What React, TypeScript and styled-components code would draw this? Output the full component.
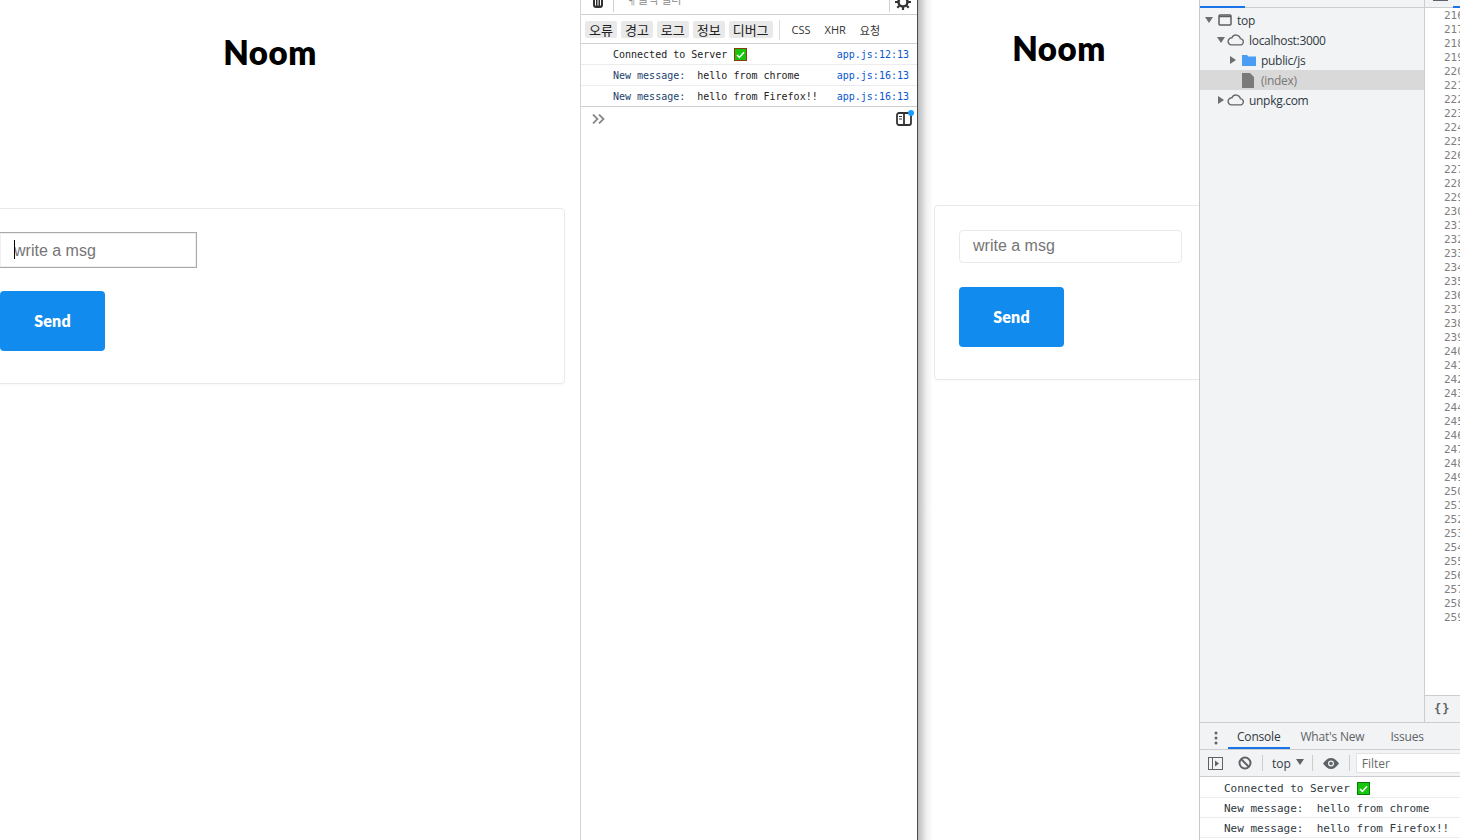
import styled, { createGlobalStyle } from "styled-components";

const GlobalStyle = createGlobalStyle`
  html, body {
    margin: 0;
    padding: 0;
    background: #fff;
    overflow: hidden;
  }
  * { box-sizing: border-box; }
`;

const uiFont = `"Open Sans", "Noto Sans CJK KR", sans-serif`;
const monoFont = `"DejaVu Sans Mono", monospace`;

const Screen = styled.div`
  display: flex;
  width: 1460px;
  height: 840px;
  overflow: hidden;
`;

/* page previews */
const Page = styled.div<{ $width: number }>`
  width: ${({ $width }) => $width}px;
  flex: none;
  height: 100%;
  overflow: hidden;
  background: #fff;
`;

const LeftPage = styled(Page)`
  border-right: 1px solid #d6d6d6;
`;

const RightPage = styled(Page)`
  position: relative;
  &::before {
    content: "";
    position: absolute;
    left: 0;
    top: 0;
    bottom: 0;
    width: 15px;
    background: linear-gradient(90deg, #bdbdbd, #f2f2f2 60%, #fff);
  }
`;

const Title = styled.h1<{ $top: number; $bottom: number; $left: number; $width: number }>`
  margin: ${({ $top }) => $top}px 0 ${({ $bottom }) => $bottom}px ${({ $left }) => $left}px;
  width: ${({ $width }) => $width}px;
  text-align: center;
  font: 800 33px/40px Lato, sans-serif;
  letter-spacing: 0.5px;
  color: #000;
`;

const Card = styled.section<{ $left: number; $width: number }>`
  margin-left: ${({ $left }) => $left}px;
  width: ${({ $width }) => $width}px;
  padding: 24px 24px 32px;
  border: 1px solid #e9e9e9;
  border-radius: 4px;
  background: #fff;
  box-shadow: 0 1px 2px rgba(0, 0, 0, 0.03);
`;

const InputBox = styled.div`
  width: 223px;
  height: 33px;
  margin-bottom: 24px;
  padding: 0 0 2px 13px;
  display: flex;
  align-items: center;
  background: #fff;
  font: 16px "Liberation Sans", Arial, sans-serif;
  color: #757575;
  border: 1px solid #e9e9e9;
  border-radius: 4px;
`;

const FocusedInput = styled(InputBox)`
  position: relative;
  width: 198px;
  height: 36px;
  margin: -1px 0 23px -1px;
  padding: 2px 0 0 14px;
  border-color: #a9a9ad;
  border-radius: 0;
  box-shadow: inset 0 0 0 1px #efefef;
`;

const Caret = styled.span`
  position: absolute;
  left: 14px;
  top: 7px;
  width: 1px;
  height: 19px;
  background: #000;
`;

const SendButton = styled.button`
  display: block;
  width: 105px;
  height: 60px;
  border: none;
  border-radius: 4px;
  background: #118bee;
  color: #fff;
  font: 800 16px Lato, sans-serif;
  letter-spacing: 0.2px;
  padding: 0 0 2px;
`;

/* popup devtools */
const Devtools = styled.div`
  width: 337px;
  flex: none;
  height: 100%;
  background: #fff;
  border-right: 1px solid #4a4a4a;
  overflow: hidden;
  font-family: ${uiFont};
`;

const TopBar = styled.div`
  height: 15px;
  border-bottom: 1px solid #d0d0d0;
  position: relative;
  overflow: hidden;
`;

const TrashIcon = styled.svg`
  position: absolute;
  left: 11px;
  top: -3px;
`;

const GearIcon = styled.svg`
  position: absolute;
  left: 314px;
  top: -6px;
`;

const TopDivider = styled.span<{ $left: number }>`
  position: absolute;
  left: ${({ $left }) => $left}px;
  top: 0;
  width: 1px;
  height: 12px;
  background: #d0d0d0;
`;

const ClippedFilter = styled.span`
  position: absolute;
  left: 47px;
  top: -7px;
  font-size: 11px;
  line-height: 14px;
  color: #8a8a8a;
`;

const LevelBar = styled.div`
  height: 29px;
  padding: 6px 0 0 4px;
  display: flex;
  gap: 4px;
  border-bottom: 1px solid #d0d0d0;
  font-size: 13px;
`;

const Level = styled.span`
  height: 17px;
  padding: 0 4px;
  display: flex;
  align-items: center;
  background: #e9e9e9;
  border-radius: 2px;
  color: #222;
`;

const LevelDivider = styled.span`
  width: 1px;
  height: 20px;
  margin: -1px 8px 0 2px;
  background: #dcdcdc;
`;

const LevelText = styled.span`
  height: 17px;
  display: flex;
  align-items: center;
  margin-right: 10px;
  color: #333;
  font-size: 11px;
`;

const LogRow = styled.div<{ $height?: number; $indent: number; $size?: number }>`
  height: ${({ $height }) => $height ?? 21}px;
  padding-left: ${({ $indent }) => $indent}px;
  display: flex;
  align-items: center;
  border-bottom: 1px solid #ececec;
  font: ${({ $size }) => $size ?? 10}px ${monoFont};
  white-space: pre;
  color: #222;
`;

const LastLogRow = styled(LogRow)`
  border-bottom-color: #d0d0d0;
`;

const Blue = styled.span`
  color: #1d3f6e;
`;

const Source = styled.span`
  margin-left: auto;
  margin-right: 8px;
  color: #0b57d0;
`;

const CheckBox = styled.svg`
  margin-left: 7px;
  flex: none;
`;

const Prompt = styled.div`
  height: 24px;
  padding: 0 5px 0 11px;
  display: flex;
  align-items: center;
  justify-content: space-between;
  position: relative;
`;

const BlueDot = styled.span`
  position: absolute;
  right: 3px;
  top: 3px;
  width: 6px;
  height: 6px;
  border-radius: 50%;
  background: #1a9bff;
`;

/* docked devtools */
const Docked = styled.div`
  flex: 1;
  min-width: 0;
  height: 100%;
  display: flex;
  flex-direction: column;
  border-left: 1px solid #c6c8cc;
  font-family: ${uiFont};
  background: #f1f3f4;
`;

const SourcesArea = styled.div`
  height: 723px;
  display: flex;
  border-bottom: 1px solid #cbcdd1;
  flex: none;
`;

const Navigator = styled.div`
  width: 225px;
  flex: none;
  border-right: 1px solid #cbcdd1;
`;

const NavTabs = styled.div`
  height: 8px;
  border-bottom: 1px solid #cbcdd1;
  position: relative;
  display: flex;
`;

const NavLabel = styled.span<{ $left: number }>`
  position: absolute;
  left: ${({ $left }) => $left}px;
  top: -15px;
  font-size: 12px;
  line-height: 16px;
  color: #5f6368;
`;

const ActiveLine = styled.span<{ $left: number; $width: number }>`
  position: absolute;
  left: ${({ $left }) => $left}px;
  width: ${({ $width }) => $width}px;
  bottom: -1px;
  height: 2px;
  background: #1a73e8;
`;

const TreeList = styled.div`
  padding-top: 2px;
`;

const TreeRow = styled.div<{ $indent: number; $selected?: boolean }>`
  height: 20px;
  padding-left: ${({ $indent }) => $indent}px;
  display: flex;
  align-items: center;
  gap: 5px;
  font-size: 12px;
  letter-spacing: -0.3px;
  color: ${({ $selected }) => ($selected ? "#777" : "#303942")};
  background: ${({ $selected }) => ($selected ? "#d9d9d9" : "transparent")};
`;

const Arrow = styled.span<{ $open?: boolean; $hidden?: boolean }>`
  width: 0;
  height: 0;
  flex: none;
  visibility: ${({ $hidden }) => ($hidden ? "hidden" : "visible")};
  ${({ $open }) =>
    $open
      ? `border-left: 4px solid transparent; border-right: 4px solid transparent; border-top: 6px solid #6e6e6e;`
      : `border-top: 4px solid transparent; border-bottom: 4px solid transparent; border-left: 6px solid #6e6e6e; margin-right: 1px;`}
`;

const CloudIcon = styled.svg`
  margin-left: -3px;
  flex: none;
`;

const Editor = styled.div`
  flex: 1;
  min-width: 0;
  background: #fff;
  display: flex;
  flex-direction: column;
  overflow: hidden;
`;

const EditorTabs = styled.div`
  height: 8px;
  background: #f1f3f4;
  border-bottom: 1px solid #cbcdd1;
  position: relative;
  flex: none;
`;

const ClippedTabIcon = styled.span`
  position: absolute;
  left: 8px;
  top: 0;
  width: 15px;
  height: 1px;
  background: #5f6368;
`;

const Gutter = styled.div`
  flex: 1;
  padding: 1px 0 0 19px;
  font: 11px/14px ${monoFont};
  color: #7f7f7f;
  white-space: nowrap;
`;

const FormatBar = styled.div`
  height: 27px;
  flex: none;
  background: #f1f3f4;
  border-top: 1px solid #cbcdd1;
  display: flex;
  align-items: center;
  padding-left: 9px;
  font: bold 12px ${monoFont};
  color: #5f6368;
  letter-spacing: 1px;
`;

const DrawerTabs = styled.div`
  height: 27px;
  flex: none;
  display: flex;
  align-items: stretch;
  border-bottom: 1px solid #cbcdd1;
  font-size: 12px;
  letter-spacing: -0.2px;
  color: #5f6368;
`;

const Kebab = styled.svg`
  margin: 8px 10px 0 14px;
`;

const DrawerTab = styled.span<{ $active?: boolean; $gap: number }>`
  display: flex;
  align-items: center;
  padding: 1px 10px 0 ${({ $gap }) => $gap}px;
  color: ${({ $active }) => ($active ? "#303942" : "#5f6368")};
  ${({ $active }) => ($active ? "box-shadow: inset 0 -2px 0 #1a73e8;" : "")}
`;

const ConsoleBar = styled.div`
  height: 27px;
  flex: none;
  display: flex;
  align-items: center;
  border-bottom: 1px solid #cbcdd1;
  padding-left: 8px;
  font-size: 12px;
  color: #303942;
  overflow: hidden;

  & svg {
    flex: none;
  }
`;

const BanIcon = styled.svg`
  margin-left: 15px;
`;

const BarDivider = styled.span<{ $margin: string }>`
  width: 1px;
  height: 16px;
  background: #cbcdd1;
  margin: ${({ $margin }) => $margin};
  flex: none;
`;

const ContextArrow = styled.span`
  border-left: 4px solid transparent;
  border-right: 4px solid transparent;
  border-top: 6px solid #5f6368;
  margin: -3px 0 0 5px;
`;

const FilterBox = styled.div`
  width: 110px;
  height: 20px;
  flex: none;
  background: #fff;
  border: 1px solid #e3e3e3;
  border-right: none;
  margin-left: 6px;
  padding: 1px 0 0 5px;
  display: flex;
  align-items: center;
  color: #6a6a6a;
`;

const ConsoleOutput = styled.div`
  flex: 1;
  background: #fff;
`;

const DockedRow = styled(LogRow)`
  padding-top: 2px;
  color: #303942;
`;

const lineNumbers = Array.from({ length: 44 }, (_, i) => 216 + i);

function CheckMark({ edge }: { edge: string }) {
  return (
    <CheckBox width="13" height="13" viewBox="0 0 13 13">
      <rect x="0.5" y="0.5" width="12" height="12" fill="#16c60c" stroke={edge} />
      <path d="M3 7l2.4 2.4L10 4.2" fill="none" stroke="#fff" strokeWidth="1.5" />
    </CheckBox>
  );
}

function Cloud() {
  return (
    <CloudIcon width="17" height="12" viewBox="0 0 19 13" fill="none" stroke="#666" strokeWidth="1.5">
      <path d="M5 12h9.500a3.500 3.500 0 0 0 .5-7 5 5 0 0 0-9.500-1A4 4 0 0 0 5 12z" />
    </CloudIcon>
  );
}

export default function App() {
  return (
    <>
      <GlobalStyle />
      <Screen>
        <LeftPage $width={581}>
          <Title $top={32} $bottom={136} $left={0} $width={540}>
            Noom
          </Title>
          <Card $left={-25} $width={590}>
            <FocusedInput>
              <Caret />
              write a msg
            </FocusedInput>
            <SendButton>Send</SendButton>
          </Card>
        </LeftPage>

        <Devtools>
          <TopBar>
            <TrashIcon width="12" height="12" viewBox="0 0 12 12">
              <path d="M1 0h10v8a3 3 0 0 1-3 3H4a3 3 0 0 1-3-3z" fill="#333" />
              <path d="M3.500 0v8.500M6 0v8.500M8.500 0v8.500" stroke="#fff" />
            </TrashIcon>
            <TopDivider $left={32} />
            <ClippedFilter>¶ 클릭 필터</ClippedFilter>
            <TopDivider $left={308} />
            <GearIcon width="16" height="16" viewBox="0 0 16 16">
              <circle cx="8" cy="8" r="4.500" fill="none" stroke="#333" strokeWidth="2.500" />
              <path d="M8 0v3M8 13v3M0 8h3M13 8h3M2.300 2.300l2 2M11.700 11.700l2 2M2.300 13.700l2-2M11.700 4.300l2-2" stroke="#333" strokeWidth="2.200" />
            </GearIcon>
          </TopBar>
          <LevelBar>
            <Level>오류</Level>
            <Level>경고</Level>
            <Level>로그</Level>
            <Level>정보</Level>
            <Level>디버그</Level>
            <LevelDivider />
            <LevelText>CSS</LevelText>
            <LevelText>XHR</LevelText>
            <LevelText>요청</LevelText>
          </LevelBar>
          <LogRow $indent={32}>
            Connected to Server
            <CheckMark edge="#8a3a10" />
            <Source>app.js:12:13</Source>
          </LogRow>
          <LogRow $indent={32}>
            <Blue>New message:</Blue>  hello from chrome
            <Source>app.js:16:13</Source>
          </LogRow>
          <LastLogRow $indent={32}>
            <Blue>New message:</Blue>  hello from Firefox!!
            <Source>app.js:16:13</Source>
          </LastLogRow>
          <Prompt>
            <svg width="13" height="10" viewBox="0 0 13 10" fill="none" stroke="#8a8a8a" strokeWidth="1.800">
              <path d="M1 0.500l4.500 4.500L1 9.500M7 0.500l4.500 4.500L7 9.500" />
            </svg>
            <svg width="16" height="14" viewBox="0 0 16 14" fill="none" stroke="#333" strokeWidth="1.800">
              <rect x="1" y="1" width="14" height="12" rx="2" />
              <path d="M8 1v12" />
              <path d="M3 4.500h3M3 7h3" strokeWidth="1.100" />
            </svg>
            <BlueDot />
          </Prompt>
        </Devtools>

        <RightPage $width={281}>
          <Title $top={28} $bottom={137} $left={17} $width={248}>
            Noom
          </Title>
          <Card $left={16} $width={400}>
            <InputBox>write a msg</InputBox>
            <SendButton>Send</SendButton>
          </Card>
        </RightPage>

        <Docked>
          <SourcesArea>
            <Navigator>
              <NavTabs>
                <NavLabel $left={8}>Page</NavLabel>
                <NavLabel $left={53}>Filesystem</NavLabel>
                <ActiveLine $left={0} $width={45} />
              </NavTabs>
              <TreeList>
                <TreeRow $indent={5}>
                  <Arrow $open />
                  <svg width="14" height="12" viewBox="0 0 14 12" fill="none" stroke="#5f5f5f" strokeWidth="1.500">
                    <rect x="1" y="1" width="12" height="10" rx="1" />
                    <path d="M1 2.500h12" />
                  </svg>
                  top
                </TreeRow>
                <TreeRow $indent={17}>
                  <Arrow $open />
                  <Cloud />
                  localhost:3000
                </TreeRow>
                <TreeRow $indent={30}>
                  <Arrow />
                  <svg width="14" height="12" viewBox="0 0 14 12">
                    <path d="M0 1h5l1.500 1.500H14V12H0z" fill="#4b9df3" />
                  </svg>
                  public/js
                </TreeRow>
                <TreeRow $indent={30} $selected>
                  <Arrow $hidden />
                  <svg width="14" height="15" viewBox="0 0 14 15">
                    <path d="M0 0h8l4 4v11H0z" fill="#7a7a7a" />
                  </svg>
                  (index)
                </TreeRow>
                <TreeRow $indent={18}>
                  <Arrow />
                  <Cloud />
                  unpkg.com
                </TreeRow>
              </TreeList>
            </Navigator>
            <Editor>
              <EditorTabs>
                <ClippedTabIcon />
                <ActiveLine $left={28} $width={8} />
              </EditorTabs>
              <Gutter>
                {lineNumbers.map((n) => (
                  <div key={n}>{n}</div>
                ))}
              </Gutter>
              <FormatBar>{"{}"}</FormatBar>
            </Editor>
          </SourcesArea>

          <DrawerTabs>
            <Kebab width="4" height="14" viewBox="0 0 4 14" fill="#5f6368">
              <circle cx="2" cy="2" r="1.500" />
              <circle cx="2" cy="7" r="1.500" />
              <circle cx="2" cy="12" r="1.500" />
            </Kebab>
            <DrawerTab $active $gap={9}>
              Console
            </DrawerTab>
            <DrawerTab $gap={10}>What's New</DrawerTab>
            <DrawerTab $gap={16}>Issues</DrawerTab>
          </DrawerTabs>

          <ConsoleBar>
            <svg width="15" height="13" viewBox="0 0 15 13" fill="none" stroke="#5f6368">
              <rect x="0.500" y="0.500" width="14" height="12" />
              <path d="M4.500 0.500v12" />
              <path d="M7 3.500l4 3-4 3z" fill="#5f6368" stroke="none" />
            </svg>
            <BanIcon width="14" height="14" viewBox="0 0 14 14" fill="none" stroke="#5f6368" strokeWidth="2">
              <circle cx="7" cy="7" r="5.500" />
              <path d="M3 3l8 8" />
            </BanIcon>
            <BarDivider $margin="0 9px 0 10px" />
            top
            <ContextArrow />
            <BarDivider $margin="0 10px 0 8px" />
            <svg width="16" height="11" viewBox="0 0 16 11">
              <path d="M0 5.500C2.500 2 5 0 8 0s5.500 2 8 5.500C13.500 9 11 11 8 11S2.500 9 0 5.500z" fill="#5f6368" />
              <circle cx="8" cy="5.500" r="3" fill="#f1f3f4" />
              <circle cx="8" cy="5.500" r="1.800" fill="#5f6368" />
            </svg>
            <BarDivider $margin="0 0 0 10px" />
            <FilterBox>Filter</FilterBox>
          </ConsoleBar>

          <ConsoleOutput>
            <DockedRow $indent={24} $size={11}>
              Connected to Server
              <CheckMark edge="#0a7a0a" />
            </DockedRow>
            <DockedRow $indent={24} $size={11} $height={20}>
              New message:  hello from chrome
            </DockedRow>
            <DockedRow $indent={24} $size={11} $height={20}>
              New message:  hello from Firefox!!
            </DockedRow>
          </ConsoleOutput>
        </Docked>
      </Screen>
    </>
  );
}
